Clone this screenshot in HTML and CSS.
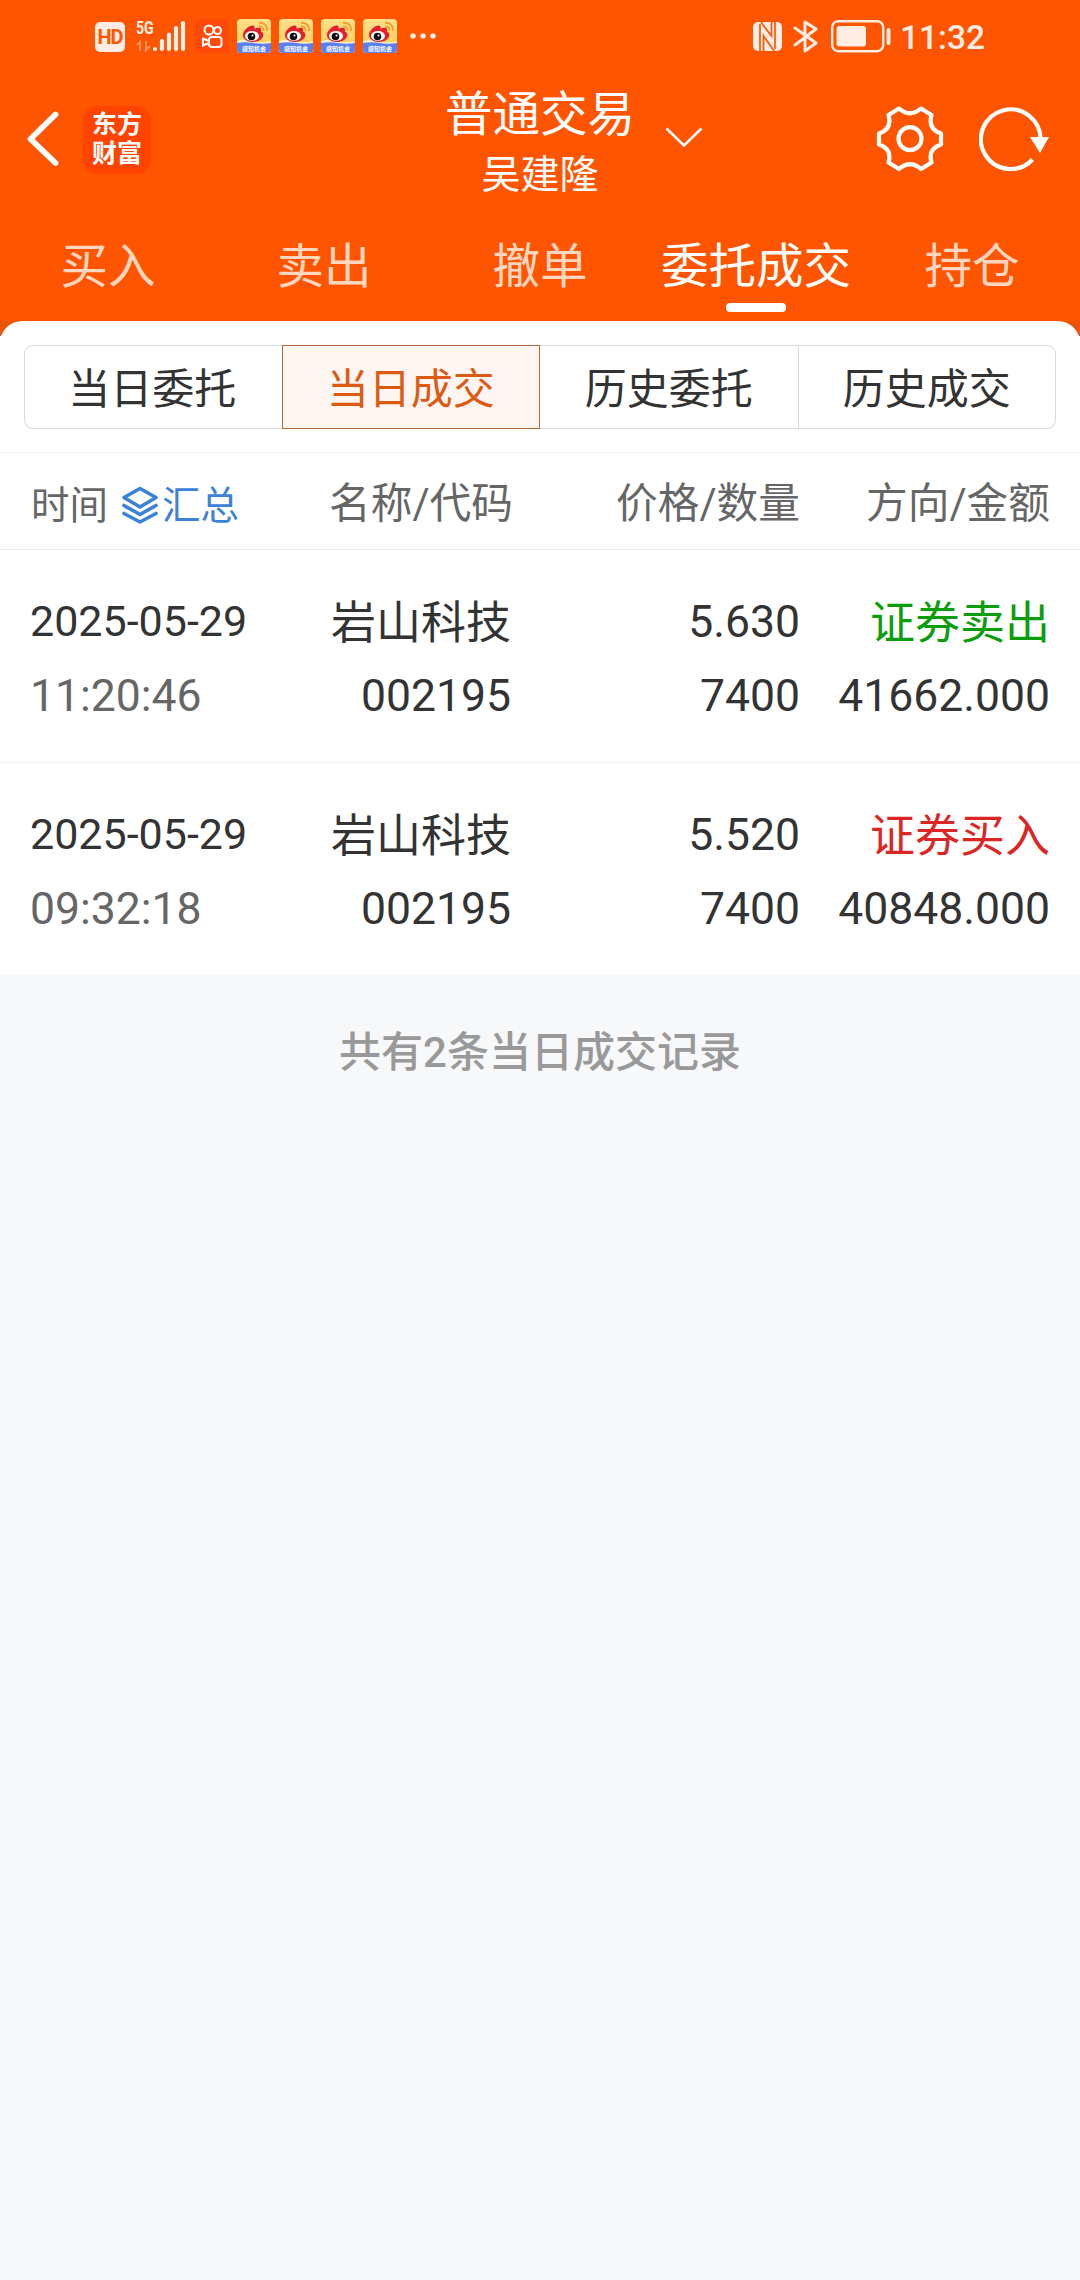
FILE: index.html
```html
<!DOCTYPE html>
<html lang="zh-CN">
<head>
<meta charset="utf-8">
<title>普通交易</title>
<link rel="stylesheet" href="styles.css">
</head>
<body>
<svg class="defs" width="0" height="0">
  <defs>
    <linearGradient id="sky" x1="0" y1="0" x2="0" y2="1"><stop offset="0" stop-color="#ffe08a"/><stop offset="1" stop-color="#ffc94f"/></linearGradient>
    <symbol id="weibo" viewBox="0 0 34 34">
      <rect width="34" height="34" rx="4" fill="url(#sky)"/>
      <path d="M0 22q9-3 17 0t17 0v8a4 4 0 0 1-4 4H4a4 4 0 0 1-4-4z" fill="#fff2cf"/>
      <path d="M0 24q9-1.500 17 0t17 0v6a4 4 0 0 1-4 4H4a4 4 0 0 1-4-4z" fill="#5a80f5"/>
      <path d="M6 16c0-5 8-11 11-9 1 1 .5 2 .5 3 2-1.500 6-2 6.500 0 .3 1-.5 2 0 2.500 2 1 3 2.500 2 5-1.500 4-6 5.500-10.500 5.500C10 23 6 20 6 16z" fill="#e3202b"/>
      <ellipse cx="15" cy="17" rx="7" ry="5" fill="#fff"/>
      <circle cx="14.500" cy="17.500" r="3.800" fill="#111"/>
      <circle cx="15.500" cy="16.500" r="1" fill="#fff"/>
      <path d="M22 7.500q4.500-.5 4.500 4.500M22 3.800q8.500-.5 8 8.200" fill="none" stroke="#f0a02c" stroke-width="1.800"/>
    </symbol>
  </defs>
</svg>
<div class="screen">
  <header class="top">
    <div class="status">
      <div class="status-left">
        <span class="hd">HD</span>
        <div class="signal">
          <span class="net">5G</span>
          <svg width="50" height="34" viewBox="0 0 50 34">
            <g stroke="#ffece3" stroke-width="4.200" stroke-linecap="round"><path d="M19 30v0M26 22v8M33 15.500v14.500M40 9v21M47 4v26"/></g>
            <path d="M1 26l3-3v9M10 22v9l4-4" fill="none" stroke="#fff" stroke-opacity=".35" stroke-width="2"/>
          </svg>
        </div>
        <svg class="kuaishou" width="34" height="34" viewBox="0 0 34 34"><rect width="34" height="34" fill="#ff4a0a"/><g fill="none" stroke="#fff" stroke-width="2"><circle cx="14" cy="11" r="4.500"/><circle cx="22.500" cy="11.500" r="3.500"/><rect x="14" y="18" width="12.500" height="10" rx="3"/><path d="M14 22l-6-2.500v7l6-2.500"/></g></svg>
        <div class="app"><svg width="34" height="34"><use href="#weibo"/></svg><span>感知机会</span></div>
        <div class="app"><svg width="34" height="34"><use href="#weibo"/></svg><span>感知机会</span></div>
        <div class="app"><svg width="34" height="34"><use href="#weibo"/></svg><span>感知机会</span></div>
        <div class="app"><svg width="34" height="34"><use href="#weibo"/></svg><span>感知机会</span></div>
        <svg class="more" width="28" height="8" viewBox="0 0 28 8" fill="#fff" fill-opacity=".9"><circle cx="4" cy="4" r="2.700"/><circle cx="14" cy="4" r="2.700"/><circle cx="24" cy="4" r="2.700"/></svg>
      </div>
      <div class="status-right">
        <svg width="29" height="29" viewBox="0 0 29 29"><rect width="29" height="29" rx="5" fill="#ffece3"/><g fill="none" stroke="#ff5500" stroke-width="1.700"><path d="M7 2V29M22 0V27M8 0L10 3L18.500 14V0M21 29L19 26L10.500 14V29"/></g></svg>
        <svg class="bt" width="26" height="33" viewBox="0 0 26 33"><path d="M2 8l21 15-11 8V2l11 7L2 25" fill="none" stroke="#ffece3" stroke-width="3" stroke-linejoin="round" stroke-linecap="round"/></svg>
        <svg class="battery" width="60" height="33" viewBox="0 0 60 33"><rect x="1.200" y="1.200" width="51" height="30" rx="6" fill="none" stroke="#ffece3" stroke-width="2.400"/><rect x="5.500" y="6" width="29.500" height="20.500" rx="3" fill="#ffece3"/><rect x="55.500" y="8" width="4" height="17" rx="2" fill="#ffece3"/></svg>
        <span class="clock">11:32</span>
      </div>
    </div>
    <div class="nav">
      <div class="nav-side">
        <svg class="back" width="34" height="56" viewBox="0 0 34 56"><path d="M29.500 3.500L4.500 28l25 24" fill="none" stroke="#fff" stroke-width="5.800" stroke-linecap="round" stroke-linejoin="round"/></svg>
        <div class="brand">东方财富</div>
      </div>
      <div class="account">
        <h1>普通交易</h1>
        <p>吴建隆</p>
      </div>
      <div class="nav-side nav-actions">
        <svg class="chev" width="38" height="22" viewBox="0 0 38 22"><path d="M1.500 1.500L19 18.500 36.500 1.500" fill="none" stroke="#fff" stroke-width="2.500"/></svg>
        <svg class="gear" width="68" height="66" viewBox="0 0 68 66"><g fill="none" stroke="#fff" stroke-width="4.200" stroke-linejoin="round"><path d="M23 2.500Q34 12 45 2.500L55.500 9Q51.500 23 65 27.500V38.500Q51.500 43 55.500 56.500L45 63Q34 53.500 23 63L12.500 56.500Q16.500 43 3 38.500V27.500Q16.500 23 12.500 9Z"/><circle cx="34" cy="32.700" r="11.500"/></g></svg>
        <svg class="refresh" width="70" height="66" viewBox="0 0 70 66"><path d="M61.500 32.500A29.800 29.800 0 1 0 53.500 52.500" fill="none" stroke="#fff" stroke-width="4.200"/><path d="M51 30h19L61 46z" fill="#fff"/></svg>
      </div>
    </div>
    <nav class="tabs">
      <span>买入</span><span>卖出</span><span>撤单</span><span class="on">委托成交</span><span>持仓</span>
    </nav>
  </header>
  <div class="corners"></div>
  <main class="sheet">
    <div class="segments">
      <span>当日委托</span><span class="on">当日成交</span><span>历史委托</span><span>历史成交</span>
    </div>
    <div class="grid head">
      <div class="time">时间
        <svg width="38" height="38" viewBox="0 0 38 38"><g fill="none" stroke="#3b82d8" stroke-width="3.600" stroke-linejoin="round" stroke-linecap="round"><path d="M19 2.500L35 11.500 19 21 3 11.500Z"/><path d="M3 19.500l16 9 16-9M3 27.500l16 8.500 16-8.500"/></g></svg><b>汇总</b></div>
      <span class="name">名称/代码</span><span>价格/数量</span><span>方向/金额</span>
    </div>
    <div class="grid row">
      <span class="date">2025-05-29</span><span class="cjk">岩山科技</span><span>5.630</span><span class="cjk sell">证券卖出</span>
      <span class="hour">11:20:46</span><span>002195</span><span>7400</span><span>41662.000</span>
    </div>
    <div class="grid row">
      <span class="date">2025-05-29</span><span class="cjk">岩山科技</span><span>5.520</span><span class="cjk buy">证券买入</span>
      <span class="hour">09:32:18</span><span>002195</span><span>7400</span><span>40848.000</span>
    </div>
  </main>
  <p class="summary">共有2条当日成交记录</p>
</div>
</body>
</html>
```
FILE: styles.css
```css
* { box-sizing: border-box; margin: 0; padding: 0; }
body {
  width: 1080px;
  font-family: Roboto, "Noto Sans CJK SC", sans-serif;
  color: #333;
  background: #f7f8fa;
}
.defs { position: absolute; }
svg { display: block; flex: none; }
.screen { height: 2280px; overflow: hidden; background: #f7f8fa; }
.top { height: 321px; background: #ff5500; color: #fff; }

.status { height: 75px; display: flex; justify-content: space-between; padding: 0 95px; }
.status-left { display: flex; align-items: flex-start; padding-top: 19px; }
.hd {
  width: 30px; height: 30px; margin-top: 3px; border-radius: 5px;
  background: #ffece3; color: #ff5500;
  font-size: 20px; font-weight: 700; line-height: 31px; text-align: center; letter-spacing: -1px;
}
.signal { position: relative; margin-left: 11px; }
.net {
  position: absolute; left: 0; top: -1px;
  font-size: 19px; font-weight: 700; line-height: 19px; transform: scaleX(.74); transform-origin: 0 0;
  color: #ffece3;
}
.kuaishou { margin-left: 9px; }
.app { position: relative; width: 34px; margin-left: 8px; }
.app span {
  position: absolute; left: 5px; bottom: 1px; width: 48px;
  font-size: 12px; line-height: 12px; font-weight: 700; color: #fff;
  transform: scale(.5); transform-origin: 0 100%;
}
.more { margin: 13px 0 0 12px; }
.status-right { display: flex; align-items: flex-start; padding-top: 22px; color: #ffece3; }
.bt { margin: -2px 0 0 11px; }
.battery { margin: -2px 0 0 12px; }
.clock { margin-left: 9px; font-size: 33.500px; font-weight: 500; line-height: 31px; }

.nav { height: 135px; display: grid; grid-template-columns: 400px 280px 400px; }
.nav-side { display: flex; align-items: flex-start; }
.back { margin: 36px 0 0 26px; }
.brand {
  width: 68px; height: 68px; margin: 31px 0 0 23px; padding: 2px 8px 0 9px; border-radius: 14px;
  background: #ff4400; font-family: "Noto Sans CJK SC", sans-serif;
  font-size: 25px; font-weight: 700; line-height: 29px;
}
.account { text-align: center; font-family: "Noto Sans CJK SC", sans-serif; }
.account h1 { font-size: 47.500px; font-weight: 400; line-height: 56px; margin-top: 8px; }
.account p { font-size: 39px; line-height: 48px; margin-top: 8px; }
.nav-actions { justify-content: flex-start; }
.chev { margin: 52px 0 0 -15px; }
.gear { margin: 31px 0 0 173px; }
.refresh { margin: 32px 0 0 35px; }

.tabs { height: 111px; display: grid; grid-template-columns: repeat(5, 1fr); }
.tabs span {
  position: relative; text-align: center; font-size: 47.500px; line-height: 114px;
  color: #ffd6c0; white-space: nowrap;
}
.tabs .on { color: #fff; }
.tabs .on::after {
  content: ""; position: absolute; left: 78px; top: 93px;
  width: 60px; height: 9px; border-radius: 4px; background: #fff;
}

.corners { height: 15px; background: #eb5404; }
.sheet {
  position: relative; margin-top: -15px; height: 654px; padding-top: 24px;
  background: #fff; border-radius: 22px 22px 0 0;
}
.segments {
  display: grid; grid-template-columns: repeat(4, 1fr);
  width: 1032px; height: 84px; margin-left: 24px;
  border: 1px solid #d6d9da; border-radius: 9px;
}
.segments span {
  height: 82px; font-size: 42px; line-height: 88px; text-align: center; border-left: 1px solid #d6d9da;
}
.segments span:first-child { border-left: 0; padding-right: 3px; }
.segments .on {
  height: 84px; margin: -1px 0 -1px -1px; color: #dd5a12; background: #fff5f2;
  border: 1px solid #b06a3c;
}
.segments .on + span { border-left: 0; }

.grid {
  display: grid; grid-template-columns: 261px 220px 289px 250px;
  padding: 0 30px; text-align: right; white-space: nowrap;
}
.head {
  height: 98px; margin-top: 23px; line-height: 101px; font-size: 41.700px; color: #666;
  border-top: 1px solid #f5f5f5; border-bottom: 1px solid #ebebeb;
}
.name { margin-right: -2px; }
.time { display: flex; align-items: center; font-size: 38.500px; height: 104px; padding-left: 1px; }
.time svg { margin-left: 13px; }
.time b { font-weight: 400; color: #3b82d8; margin-left: 3px; }
.row { height: 212px; padding-top: 35px; grid-template-rows: 74px 73px; line-height: 74px; font-size: 44.500px; }
.row + .row { height: 213px; border-top: 1px solid #f0f0f0; }
.date, .hour { text-align: left; }
.date { font-size: 43px; line-height: 73px; }
.hour { color: #666; }
.cjk { font-size: 45px; line-height: 77px; }
.sell { color: #0b9d0b; }
.buy { color: #dc2626; }
.summary { margin-top: 45px; text-align: center; font-size: 42px; line-height: 66px; color: #999; font-weight: 500; }
```
